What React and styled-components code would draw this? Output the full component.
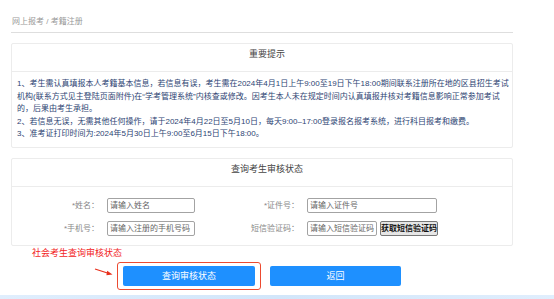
import React from "react";
import styled, { createGlobalStyle } from "styled-components";

const Global = createGlobalStyle`
  html, body { margin: 0; padding: 0; overflow: hidden; background: #fff; }
  body { font-family: "Liberation Sans", "Noto Sans CJK SC", sans-serif; }
  * { box-sizing: border-box; }
`;

const Page = styled.div`
  width: 554px;
  height: 299px;
  display: flex;
  flex-direction: column;
`;

const Main = styled.div`
  margin-left: 11px;
  width: 502px;
  display: flex;
  flex-direction: column;
`;

const Breadcrumb = styled.div`
  padding: 16px 0 4px 1px;
  line-height: 12px;
  font-size: 8px;
  color: #999;
  border-bottom: 1px solid #dedede;
`;

const Card = styled.section`
  margin-top: 10px;
  border: 1px solid #ececec;
  border-radius: 2px;
`;

const CardTitle = styled.div`
  height: ${(p) => p.$h}px;
  padding-top: 2px;
  padding-left: 10px;
  line-height: 16px;
  text-align: center;
  font-size: 9px;
  color: #444;
  border-bottom: 1px solid #ececec;
`;

const Notice = styled.div`
  padding: 6px 5px 6px 5px;
  font-size: 8px;
  line-height: 12.5px;
  color: #2d4473;
  white-space: nowrap;
`;

const Form = styled.div`
  padding: 11px 0 9px 0;
  display: grid;
  grid-template-columns: 87px 97px 87px 1fr;
  column-gap: 8px;
  row-gap: 8px;
  align-items: center;
`;

const Label = styled.label`
  text-align: right;
  font-size: 8px;
  color: #888;
  line-height: 15px;
`;

const Field = styled.div`
  display: flex;
  align-items: center;
  gap: 3px;
`;

const Input = styled.input`
  width: ${(p) => p.$w}px;
  height: 15px;
  padding: 0 2px;
  margin: 0;
  border: 1px solid #a3a3a3;
  border-radius: 2px;
  font-family: "Liberation Sans", "Noto Sans CJK SC", sans-serif;
  font-size: 8px;
  color: #333;
  background: #fff;
  outline: none;
  &::placeholder { color: #666; }
`;

const SmsButton = styled.button`
  width: 58px;
  height: 15px;
  padding: 0;
  margin: 0;
  border: 1px solid #777;
  border-radius: 2px;
  background: #e6e6e6;
  font-family: "Liberation Sans", "Noto Sans CJK SC", sans-serif;
  font-size: 8px;
  font-weight: 600;
  color: #111;
  line-height: 13px;
`;

const Hint = styled.div`
  margin-left: 32px;
  margin-top: 1px;
  line-height: 12px;
  font-size: 9px;
  color: #f21d1d;
`;

const Actions = styled.div`
  margin-top: 3px;
  margin-left: 117px;
  display: flex;
  align-items: center;
  gap: 9px;
`;

const Highlight = styled.div`
  position: relative;
  padding: 3px 5px;
  border: 1.3px solid #ec4a30;
  border-radius: 3px;
  display: flex;
`;

const Arrow = styled.svg`
  position: absolute;
  left: -24px;
  top: 4px;
`;

const Button = styled.button`
  width: ${(p) => p.$w}px;
  height: 20px;
  margin: 0;
  padding: 0;
  border: none;
  border-radius: 2px;
  background: #1e90ff;
  color: #fff;
  font-family: "Liberation Sans", "Noto Sans CJK SC", sans-serif;
  font-size: 9px;
  line-height: 20px;
`;

const Band = styled.div`
  margin-top: auto;
  height: 4px;
  background: linear-gradient(90deg, #e0eefd 0%, #d2e6fa 50%, #e0eefd 100%);
`;

export default function App() {
  return (
    <Page>
      <Global />
      <Main>
        <Breadcrumb>网上报考 / 考籍注册</Breadcrumb>
        <Card>
          <CardTitle $h={28}>重要提示</CardTitle>
          <Notice>
            1、考生需认真填报本人考籍基本信息，若信息有误，考生需在2024年4月1日上午9:00至19日下午18:00期间联系注册所在地的区县招生考试
            <br />
            机构(联系方式见主登陆页面附件)在“学考管理系统”内核查或修改。因考生本人未在规定时间内认真填报并核对考籍信息影响正常参加考试
            <br />
            的，后果由考生承担。
            <br />
            2、若信息无误，无需其他任何操作，请于2024年4月22日至5月10日，每天9:00–17:00登录报名报考系统，进行科目报考和缴费。
            <br />
            3、准考证打印时间为:2024年5月30日上午9:00至6月15日下午18:00。
          </Notice>
        </Card>
        <Card>
          <CardTitle $h={28}>查询考生审核状态</CardTitle>
          <Form>
            <Label>*姓名：</Label>
            <Field>
              <Input $w={88} placeholder="请输入姓名" />
            </Field>
            <Label>*证件号：</Label>
            <Field>
              <Input $w={130} placeholder="请输入证件号" />
            </Field>
            <Label>*手机号：</Label>
            <Field>
              <Input $w={88} placeholder="请输入注册的手机号码" />
            </Field>
            <Label>短信验证码：</Label>
            <Field>
              <Input $w={70} placeholder="请输入短信验证码" />
              <SmsButton>获取短信验证码</SmsButton>
            </Field>
          </Form>
        </Card>
      </Main>
      <Hint>社会考生查询审核状态</Hint>
      <Actions>
        <Highlight>
          <Arrow width="20" height="10" viewBox="0 0 20 10">
            <line x1="1" y1="2" x2="15" y2="6.5" stroke="#e8301c" strokeWidth="1.3" />
            <polygon points="18.5,7.6 13.2,3.8 12.4,8.2" fill="#e8301c" />
          </Arrow>
          <Button $w={132}>查询审核状态</Button>
        </Highlight>
        <Button $w={131}>返回</Button>
      </Actions>
      <Band />
    </Page>
  );
}
